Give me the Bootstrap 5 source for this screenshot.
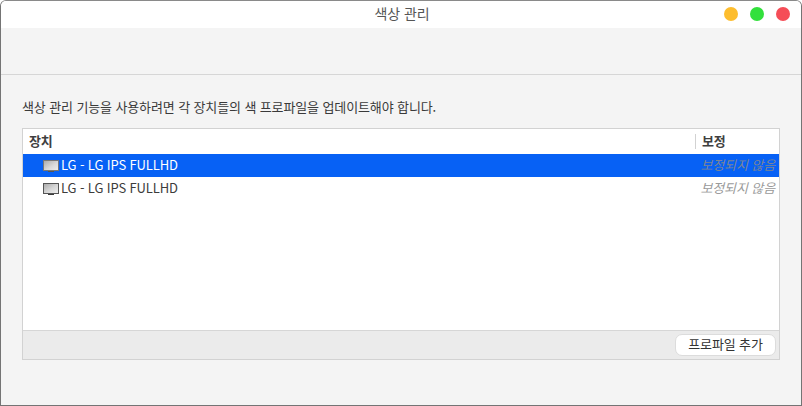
<!DOCTYPE html>
<html lang="ko">
<head>
  <meta charset="UTF-8" />
  <title>색상 관리</title>
  <link href="https://cdn.jsdelivr.net/npm/bootstrap@5.3.3/dist/css/bootstrap.min.css" rel="stylesheet">
  <style>
    html, body { height: 406px; overflow: hidden; background: #fff; }
    body { font-family: "Noto Sans CJK KR", "Noto Sans", sans-serif; font-size: 13px; letter-spacing: -0.12px; color: #333; line-height: 1; }
    .app-window { width: 802px; height: 406px; border: 1px solid #747474; border-top-color: #8a8a8a; border-radius: 6px 6px 0 0; background: #f4f4f4; overflow: hidden; }
    .title-bar { height: 27px; background: #fff; padding-right: 11px; padding-bottom: 2px; }
    .title-text { font-size: 14px; color: #555; left: 2px; right: 0; top: 5px; }
    .dot { width: 14px; height: 14px; border-radius: 50%; flex-shrink: 0; }
    .dot-min { background: #fdbd2e; }
    .dot-max { background: #32e03c; }
    .dot-close { background: #f54d57; }
    .tool-bar { height: 47px; border-bottom: 1px solid #d6d6d6; }
    .intro { padding: 25px 21px 15px; height: 53px; line-height: 13px; color: #3a3a3a; }
    .device-box { margin: 0 21px; height: 232px; border: 1px solid #d2d2d2; background: #fff; }
    .head-row { height: 25px; font-weight: 700; color: #3f3f3f; padding-left: 6px; }
    .head-name { margin-top: -2px; }
    .head-cal { width: 84px; border-left: 1px solid #d2d2d2; height: 15px; padding-left: 6px; line-height: 13px; }
    .dev-row { height: 23px; padding-left: 20px; padding-right: 4px; color: #3c3c3c; }
    .dev-row.active-row { background: #0761f5; color: #fff; }
    .dev-label { margin-top: -2px; }
    .cal-state { font-style: italic; color: #9a9a9a; white-space: nowrap; margin-top: -2px; }
    .active-row .cal-state { color: #7d8594; }
    .foot-row { height: 29px; background: #ebebeb; border-top: 1px solid #d6d6d6; padding-right: 3px; }
    .add-btn { height: 22px; width: 101px; padding: 0 0 4px; font-size: 13px; letter-spacing: -0.12px; line-height: 1; color: #333; background: #fff; border: 1px solid #dcdcdc; border-radius: 7px; }
    .add-btn:hover { background: #fff; color: #333; border-color: #dcdcdc; }
    .mon-icon { margin-right: 1px; flex-shrink: 0; }
  </style>
</head>
<body>
  <div class="app-window d-flex flex-column">
    <div class="title-bar position-relative d-flex align-items-center justify-content-end gap-2 flex-shrink-0">
      <div class="title-text position-absolute text-center">색상 관리</div>
      <span class="dot dot-min me-1"></span>
      <span class="dot dot-max me-1"></span>
      <span class="dot dot-close"></span>
    </div>
    <div class="tool-bar flex-shrink-0"></div>
    <div class="intro flex-shrink-0">색상 관리 기능을 사용하려면 각 장치들의 색 프로파일을 업데이트해야 합니다.</div>
    <div class="device-box d-flex flex-column flex-shrink-0">
      <div class="head-row d-flex align-items-center justify-content-between flex-shrink-0">
        <span class="head-name">장치</span>
        <span class="head-cal">보정</span>
      </div>
      <div class="dev-row active-row d-flex align-items-center justify-content-between flex-shrink-0">
        <span class="d-flex align-items-center">
          <svg class="mon-icon" width="17" height="14" viewBox="0 0 17 14"><defs><linearGradient id="scr1" x1="0" y1="0" x2="1" y2="1"><stop offset="0" stop-color="#a8a8a8"/><stop offset="0.55" stop-color="#d8d8d8"/><stop offset="1" stop-color="#efefef"/></linearGradient></defs><rect x="0.5" y="1.5" width="15" height="10" fill="url(#scr1)" stroke="#777"/><rect x="5" y="12" width="6" height="1" fill="#555"/></svg>
          <span class="dev-label">LG - LG IPS FULLHD</span>
        </span>
        <span class="cal-state">보정되지 않음</span>
      </div>
      <div class="dev-row d-flex align-items-center justify-content-between flex-shrink-0">
        <span class="d-flex align-items-center">
          <svg class="mon-icon" width="17" height="14" viewBox="0 0 17 14"><defs><linearGradient id="scr2" x1="0" y1="0" x2="1" y2="1"><stop offset="0" stop-color="#a8a8a8"/><stop offset="0.55" stop-color="#d8d8d8"/><stop offset="1" stop-color="#efefef"/></linearGradient></defs><rect x="0.5" y="1.5" width="15" height="10" fill="url(#scr2)" stroke="#555"/><rect x="5" y="12" width="6" height="1" fill="#3a3a3a"/></svg>
          <span class="dev-label">LG - LG IPS FULLHD</span>
        </span>
        <span class="cal-state">보정되지 않음</span>
      </div>
      <div class="flex-grow-1"></div>
      <div class="foot-row d-flex align-items-center justify-content-end flex-shrink-0">
        <button type="button" class="btn add-btn">프로파일 추가</button>
      </div>
    </div>
  </div>
  <script src="https://cdn.jsdelivr.net/npm/bootstrap@5.3.3/dist/js/bootstrap.bundle.min.js"></script>
</body>
</html>
